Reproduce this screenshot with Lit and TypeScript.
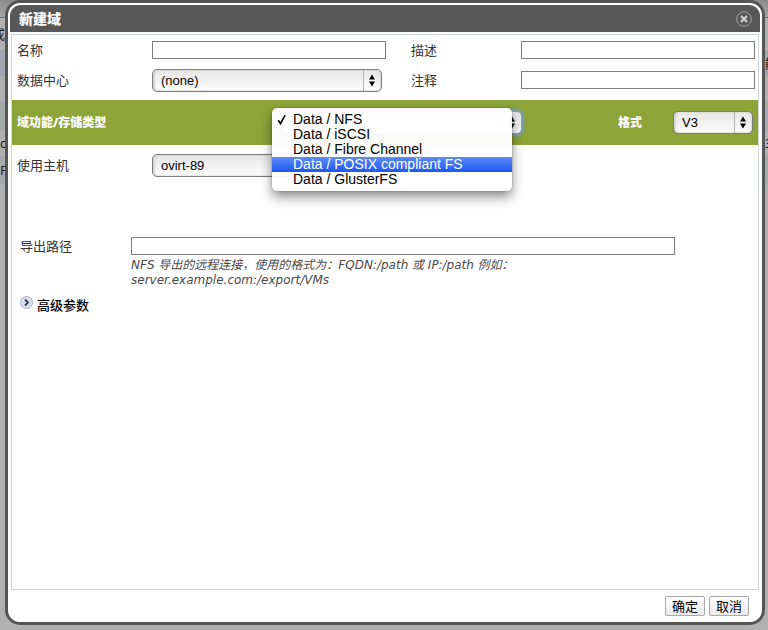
import { LitElement, html, css } from "lit";
import { customElement, property } from "lit/decorators.js";

interface BackdropRow {
  kind: string;
  left?: string;
  right?: string;
}

const backdropRows: BackdropRow[] = [
  { kind: "toolbar" },
  { kind: "head", left: "或" },
  { kind: "picked", right: "能" },
  { kind: "plain" },
  { kind: "alt" },
  { kind: "plain", left: "cs", right: "3" },
  { kind: "alt", left: "FS" },
];

const kinds = [
  "Data / NFS",
  "Data / iSCSI",
  "Data / Fibre Channel",
  "Data / POSIX compliant FS",
  "Data / GlusterFS",
];

@customElement("mac-select")
export class MacSelect extends LitElement {
  @property() value = "";
  @property() label = "";
  @property({ type: Boolean, reflect: true }) focused = false;

  static styles = css`
    :host {
      display: grid;
      min-width: 0;
    }
    .field {
      grid-area: 1 / 1;
      appearance: none;
      box-sizing: border-box;
      width: 100%;
      height: 23px;
      margin: 0;
      padding: 0 24px 0 8px;
      border: 1px solid #7c7c7c;
      border-radius: 5px;
      background: linear-gradient(#e6e6e6, #f4f4f4 60%, #fdfdfd);
      box-shadow: inset 2px 0 2px #d4d4d4, inset -1px 0 2px #d4d4d4;
      color: #000;
      font: 13px "Liberation Sans", "Noto Sans CJK SC", sans-serif;
      outline: none;
    }
    :host([focused]) .field {
      border-color: #7da3d4;
      box-shadow: 0 0 2px 2px #76a0b4;
    }
    .arrows {
      grid-area: 1 / 1;
      justify-self: end;
      align-self: center;
      pointer-events: none;
      width: 19px;
      height: 21px;
      display: block;
    }
  `;

  render() {
    return html`
      <select class="field" aria-label=${this.label}>
        <option>${this.value}</option>
      </select>
      <svg class="arrows" viewBox="0 0 19 21" aria-hidden="true">
        <path d="M.5 0V21" stroke="#b4b4b4" />
        <path d="M9 4.5L12 9.5H6ZM9 16.5L12 11.5H6Z" fill="#000" />
      </svg>
    `;
  }
}

@customElement("app-root")
export class AppRoot extends LitElement {
  static styles = css`
    :host {
      display: flex;
      position: relative;
      box-sizing: border-box;
      min-height: 100vh;
      padding: 0 3px 5px 5px;
      overflow: hidden;
      background: #b1b1b1;
      color: #333;
      font: 13px/15px "Noto Sans", "Noto Sans CJK SC", sans-serif;
    }
    .backdrop {
      position: absolute;
      inset: 0;
      color: #1c1c1c;
    }
    .row {
      display: flex;
      justify-content: space-between;
      align-items: center;
      box-sizing: border-box;
      height: 27px;
      border-bottom: 1px solid #a2a4a8;
    }
    .edge {
      display: flex;
      width: 5px;
      white-space: nowrap;
    }
    .edge.right {
      width: 3px;
    }
    .row.toolbar {
      height: 18px;
      border-color: #6c6c6c;
      background: linear-gradient(#8c8c8c, #a4a4a4);
    }
    .row.head {
      height: 33px;
    }
    .row.head .edge {
      justify-content: flex-end;
    }
    .row.picked {
      height: 25px;
      background: #a2a5b2;
    }
    .row.alt {
      background: #a7abae;
    }
    .dialog {
      position: relative;
      display: flex;
      flex-direction: column;
      flex: 1;
      min-width: 0;
      border: 3px solid #555;
      border-radius: 15px;
      background: #fff;
    }
    .title {
      display: flex;
      align-items: center;
      justify-content: space-between;
      height: 27px;
      margin: 2px 2px 0;
      padding: 0 8px 0 9px;
      border-radius: 11px 11px 0 0;
      background: #575757;
      color: #fff;
    }
    .heading {
      margin: 0;
      font-size: 14px;
      font-weight: 900;
    }
    .close {
      display: flex;
      padding: 0;
      border: 0;
      background: none;
    }
    .body {
      flex: 1;
      margin: 2px 3px 0;
      border: 1px solid #cfd7dd;
    }
    .fields {
      display: grid;
      grid-template-columns: 135px 1fr 135px 1fr;
      grid-auto-rows: 30px;
      align-items: center;
      padding: 0 3px 5px 5px;
    }
    .second {
      padding-left: 25px;
    }
    .text {
      box-sizing: border-box;
      display: block;
      width: 100%;
      height: 18px;
      margin: 0;
      padding: 0 3px;
      border: 1px solid #7f7f7f;
      background: #fff;
      font: inherit;
    }
    .short {
      margin-right: 4px;
    }
    .band {
      display: flex;
      align-items: center;
      height: 45px;
      padding: 0 5px;
      margin-bottom: 5px;
      background: #8ea338;
      color: #fff;
      font-size: 12px;
      font-weight: 900;
    }
    .kind-label {
      width: 267px;
    }
    .kind {
      position: relative;
      width: 238px;
    }
    .format-label {
      margin-left: auto;
      margin-right: 31px;
    }
    .format {
      width: 80px;
    }
    .menu {
      position: absolute;
      top: -3px;
      left: -12px;
      box-sizing: border-box;
      width: 240px;
      margin: 0;
      padding: 4px 0;
      list-style: none;
      border-radius: 5px;
      background: #fffffff4;
      box-shadow: 0 6px 12px #00000073, 0 0 2px #00000055;
      color: #000;
      font: 14px/15px "Liberation Sans", "Noto Sans CJK SC", sans-serif;
    }
    .item {
      display: flex;
      align-items: center;
      white-space: nowrap;
    }
    .item.active {
      background: linear-gradient(#5f8bf5, #1a56f2);
      color: #fff;
    }
    .tick {
      display: flex;
      width: 21px;
      padding-left: 5px;
      box-sizing: border-box;
    }
    .path {
      display: grid;
      grid-template-columns: 111px 1fr;
      align-items: center;
      padding: 0 83px 0 8px;
      margin-top: 52px;
    }
    .hint {
      grid-column: 2;
      width: 400px;
      margin: 3px 0 0;
      color: #4a4a4a;
      font: italic 12px/15px "DejaVu Sans", "Noto Sans CJK SC", sans-serif;
    }
    .more {
      display: flex;
      align-items: flex-start;
      gap: 4px;
      margin: 8px 0 0 8px;
      padding: 0;
      border: 0;
      background: none;
      color: #000;
      font: inherit;
      font-weight: 500;
    }
    .more-text {
      padding-top: 2px;
    }
    .footer {
      display: flex;
      justify-content: flex-end;
      gap: 4px;
      padding: 6px 13px;
    }
    .button {
      width: 40px;
      height: 20px;
      padding: 0;
      border: 1px solid #a6a8ac;
      border-radius: 2px;
      background: linear-gradient(#fefefe, #e9e9ee);
      color: #000;
      font: inherit;
      line-height: 16px;
    }
  `;

  render() {
    return html`
      <div class="backdrop" aria-hidden="true">
        ${backdropRows.map(
          (r) => html`<div class="row ${r.kind}">
            <span class="edge left">${r.left}</span><span class="edge right">${r.right}</span>
          </div>`,
        )}
      </div>
      <div class="dialog" role="dialog" aria-labelledby="heading">
        <header class="title">
          <h1 class="heading" id="heading">新建域</h1>
          <button class="close" aria-label="关闭">
            <svg width="16" height="16" viewBox="0 0 16 16">
              <circle cx="8" cy="8" r="7.3" fill="none" stroke="#a5a5a5" />
              <path d="M5 5L11 11M11 5L5 11" stroke="#d0d0d0" stroke-width="2.2" />
            </svg>
          </button>
        </header>
        <main class="body">
          <div class="fields">
            <label for="name">名称</label>
            <input class="text" id="name" />
            <label class="second" for="description">描述</label>
            <input class="text" id="description" />
            <span>数据中心</span>
            <mac-select class="short" label="数据中心" value="(none)"></mac-select>
            <label class="second" for="comment">注释</label>
            <input class="text" id="comment" />
          </div>
          <div class="band">
            <span class="kind-label">域功能/存储类型</span>
            <div class="kind">
              <mac-select focused label="域功能/存储类型" value="Data / NFS"></mac-select>
              <ul class="menu" role="listbox">
                ${kinds.map(
                  (k, i) => html`<li class="item ${i === 3 ? "active" : ""}" role="option" aria-selected=${i === 0}>
                    <span class="tick">
                      ${i === 0
                        ? html`<svg width="10" height="11" viewBox="0 0 10 11">
                            <path d="M1.2 6.2L3.5 9.6L8.2 1.2" fill="none" stroke="#000" stroke-width="1.6" />
                          </svg>`
                        : ""}
                    </span>
                    <span>${k}</span>
                  </li>`,
                )}
              </ul>
            </div>
            <span class="format-label">格式</span>
            <mac-select class="format" label="格式" value="V3"></mac-select>
          </div>
          <div class="fields">
            <span>使用主机</span>
            <mac-select class="short" label="使用主机" value="ovirt-89"></mac-select>
          </div>
          <div class="path">
            <label for="path">导出路径</label>
            <input class="text" id="path" />
            <p class="hint">NFS 导出的远程连接，使用的格式为：FQDN:/path 或 IP:/path 例如：server.example.com:/export/VMs</p>
          </div>
          <button class="more">
            <svg width="13" height="13" viewBox="0 0 13 13" aria-hidden="true">
              <circle cx="6.5" cy="6.5" r="6" fill="#dde1ee" stroke="#a9b0c4" />
              <path d="M5 3.5L8 6.5L5 9.5" fill="none" stroke="#2c3f63" stroke-width="1.8" />
            </svg>
            <span class="more-text">高级参数</span>
          </button>
        </main>
        <footer class="footer">
          <button class="button">确定</button>
          <button class="button">取消</button>
        </footer>
      </div>
    `;
  }
}
